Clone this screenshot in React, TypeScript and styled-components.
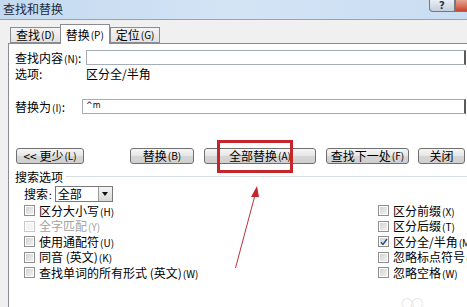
import styled, { createGlobalStyle } from 'styled-components';

const Global = createGlobalStyle`
  html, body { margin: 0; padding: 0; background: #fff; }
  body { font-family: "Noto Sans CJK SC", "DejaVu Sans", sans-serif; font-size: 12px; color: #000; }
`;

const Window = styled.div`
  position: relative;
  width: 467px;
  height: 307px;
  overflow: hidden;
  display: flex;
  flex-direction: column;
  background: #f0f0f0;
`;

const TitleBar = styled.div`
  height: 19px;
  flex: none;
  display: flex;
  align-items: center;
  padding-left: 3px;
  background: linear-gradient(90deg, #c4d9ef 0%, #d3e4f5 50%, #c9ddf2 100%);
  border-bottom: 1px solid #8fa6bd;
  font-size: 12px;
  line-height: 1;
  color: #1e2a38;
`;

const TitleText = styled.span`
  flex: 1;
  margin-top: -2px;
`;

const CaptionButton = styled.div<{ $close?: boolean }>`
  width: ${(p) => (p.$close ? 12 : 26)}px;
  height: 12px;
  align-self: flex-start;
  box-sizing: border-box;
  border: 1px solid #6d7a8a;
  border-top: none;
  border-radius: ${(p) => (p.$close ? '0' : '0 0 0 4px')};
  border-right: ${(p) => (p.$close ? 'none' : '1px solid #6d7a8a')};
  background: ${(p) =>
    p.$close ? 'linear-gradient(#e8a593, #c7452d)' : 'linear-gradient(#e9eef4, #c5ced9)'};
  display: flex;
  align-items: flex-end;
  justify-content: center;
  font-family: "DejaVu Sans", sans-serif;
  font-size: 10px;
  font-weight: bold;
  color: #334;
  line-height: 1;
`;

const Body = styled.div`
  flex: 1;
  display: flex;
  flex-direction: column;
  padding-left: 8px;
  padding-top: 4px;
`;

const TabStrip = styled.div`
  display: flex;
  align-items: flex-end;
  height: 19px;
  padding-left: 2px;
  flex: none;
`;

const Tab = styled.div<{ $active?: boolean }>`
  box-sizing: border-box;
  height: ${(p) => (p.$active ? 20 : 16)}px;
  padding: 0 5px;
  margin-bottom: ${(p) => (p.$active ? -1 : 0)}px;
  display: flex;
  align-items: center;
  border: 1px solid #898c95;
  border-bottom: ${(p) => (p.$active ? 'none' : '1px solid #898c95')};
  margin-left: ${(p) => (p.$active ? -1 : 0)}px;
  background: ${(p) => (p.$active ? '#fff' : 'linear-gradient(#f4f4f4, #e2e2e2)')};
  position: relative;
  z-index: ${(p) => (p.$active ? 1 : 0)};
  font-size: 12px;
  line-height: 1;
  white-space: nowrap;
`;

const Panel = styled.div`
  flex: 1;
  background: #fff;
  border-top: 1px solid #898c95;
  border-left: 1px solid #898c95;
  padding: 6px 0 0 6px;
  display: flex;
  flex-direction: column;
`;

const Key = styled.span`
  font-size: 10px;
  margin-left: 1px;
`;

const FieldRow = styled.div<{ $labelWidth: number; $top?: number }>`
  display: flex;
  align-items: center;
  height: 15px;
  margin-top: ${(p) => p.$top ?? 0}px;
  & > :first-child { width: ${(p) => p.$labelWidth}px; flex: none; }
`;

const Label = styled.span`
  font-size: 12px;
  line-height: 13px;
  white-space: nowrap;
`;

const TextBox = styled.div`
  flex: 1;
  height: 15px;
  box-sizing: border-box;
  border: 1px solid #a5acb5;
  border-right: 2px solid #5a5a5a;
  margin-right: 1px;
  padding-left: 3px;
  font-family: "DejaVu Sans", sans-serif;
  font-size: 8px;
  line-height: 12px;
`;

const ButtonRow = styled.div`
  display: flex;
  align-items: center;
  margin-top: 33px;
  height: 17px;
`;

const Button = styled.div<{ $w: number; $gap?: number }>`
  width: ${(p) => p.$w}px;
  margin-left: ${(p) => p.$gap ?? 0}px;
  height: 16px;
  flex: none;
  box-sizing: border-box;
  border: 1px solid #707070;
  border-radius: 3px;
  background: linear-gradient(#f6f6f6 0%, #e6e6e6 48%, #d6d6d6 52%, #cfcfcf 100%);
  display: flex;
  align-items: center;
  justify-content: center;
  font-size: 12px;
  line-height: 1;
  white-space: nowrap;
`;

const Legend = styled.div`
  display: flex;
  align-items: center;
  margin-top: 5px;
  height: 15px;
  &::after {
    content: '';
    flex: 1;
    height: 1px;
    background: #d5dfe5;
    margin-left: 3px;
  }
`;

const SearchRow = styled.div`
  display: flex;
  align-items: center;
  margin-top: 2px;
  padding-left: 9px;
  height: 16px;
  gap: 3px;
`;

const Select = styled.div`
  width: 58px;
  height: 16px;
  box-sizing: border-box;
  border: 1px solid #7a7a7a;
  display: flex;
  align-items: center;
  padding-left: 2px;
  font-size: 12px;
  line-height: 1;
`;

const SelectText = styled.span`
  flex: 1;
`;

const SelectArrow = styled.div`
  width: 14px;
  height: 14px;
  box-sizing: border-box;
  border-left: 1px solid #9a9a9a;
  background: linear-gradient(#f4f4f4, #d8d8d8);
  display: flex;
  align-items: center;
  justify-content: center;
  &::after {
    content: '';
    border-left: 3px solid transparent;
    border-right: 3px solid transparent;
    border-top: 4px solid #111;
  }
`;

const Options = styled.div`
  display: grid;
  grid-template-columns: 1fr 89px;
  padding-left: 9px;
  margin-top: 1px;
`;

const Column = styled.div`
  display: flex;
  flex-direction: column;
  min-width: 0;
`;

const Check = styled.div<{ $disabled?: boolean }>`
  display: flex;
  align-items: center;
  height: 15.5px;
  gap: 4px;
  color: ${(p) => (p.$disabled ? '#a3a3a3' : '#000')};
  font-size: 12px;
  line-height: 1;
  white-space: nowrap;
`;

const Box = styled.span<{ $disabled?: boolean }>`
  width: 11px;
  height: 11px;
  flex: none;
  box-sizing: border-box;
  border: 1px solid ${(p) => (p.$disabled ? '#c8c8c8' : '#8e8f8f')};
  background: ${(p) =>
    p.$disabled ? '#f4f4f4' : 'linear-gradient(135deg, #d0d0d0, #f4f4f4)'};
  box-shadow: inset 0 0 0 1px #fff;
  display: flex;
  align-items: center;
  justify-content: center;
`;

const Annotation = styled.div`
  position: absolute;
  left: 217px;
  top: 140px;
  width: 76px;
  height: 33px;
  box-sizing: border-box;
  border: 3px solid #c4262c;
  pointer-events: none;
`;

const ArrowSvg = styled.svg`
  position: absolute;
  left: 0;
  top: 0;
  pointer-events: none;
`;

const Watermark = styled.div`
  position: absolute;
  left: 401px;
  top: 294px;
  font-family: "DejaVu Sans", sans-serif;
  font-size: 14px;
  color: #e4e4e4;
  letter-spacing: -2px;
`;

function CheckItem({ label, k, checked, disabled }: { label: string; k: string; checked?: boolean; disabled?: boolean }) {
  return (
    <Check $disabled={disabled}>
      <Box $disabled={disabled}>
        {checked && (
          <svg width="8" height="8" viewBox="0 0 8 8">
            <path d="M1 4.2 L3 6.4 L7 1" fill="none" stroke="#2a4f8a" strokeWidth="1.5" />
          </svg>
        )}
      </Box>
      <span>
        {label}
        <Key>({k})</Key>
      </span>
    </Check>
  );
}

export default function App() {
  return (
    <>
      <Global />
      <Window>
        <TitleBar>
          <TitleText>查找和替换</TitleText>
          <CaptionButton>?</CaptionButton>
          <CaptionButton $close />
        </TitleBar>
        <Body>
          <TabStrip>
            <Tab>查找<Key>(D)</Key></Tab>
            <Tab $active>替换<Key>(P)</Key></Tab>
            <Tab>定位<Key>(G)</Key></Tab>
          </TabStrip>
          <Panel>
            <FieldRow $labelWidth={71}>
              <Label>查找内容<Key>(N)</Key>:</Label>
              <TextBox />
            </FieldRow>
            <FieldRow $labelWidth={71} $top={1}>
              <Label>选项:</Label>
              <Label>区分全/半角</Label>
            </FieldRow>
            <FieldRow $labelWidth={67} $top={18}>
              <Label>替换为<Key>(I)</Key>:</Label>
              <TextBox>^m</TextBox>
            </FieldRow>
            <ButtonRow>
              <Button $w={68} $gap={1}>&lt;&lt; 更少<Key>(L)</Key></Button>
              <Button $w={64} $gap={46}>替换<Key>(B)</Key></Button>
              <Button $w={112} $gap={10}>全部替换<Key>(A)</Key></Button>
              <Button $w={83} $gap={10}>查找下一处<Key>(F)</Key></Button>
              <Button $w={47} $gap={9}>关闭</Button>
            </ButtonRow>
            <Legend>
              <Label>搜索选项</Label>
            </Legend>
            <SearchRow>
              <Label>搜索<Key>:</Key></Label>
              <Select>
                <SelectText>全部</SelectText>
                <SelectArrow />
              </Select>
            </SearchRow>
            <Options>
              <Column>
                <CheckItem label="区分大小写" k="H" />
                <CheckItem label="全字匹配" k="Y" disabled />
                <CheckItem label="使用通配符" k="U" />
                <CheckItem label="同音 (英文)" k="K" />
                <CheckItem label="查找单词的所有形式 (英文)" k="W" />
              </Column>
              <Column>
                <CheckItem label="区分前缀" k="X" />
                <CheckItem label="区分后缀" k="T" />
                <CheckItem label="区分全/半角" k="M" checked />
                <CheckItem label="忽略标点符号" k="S" />
                <CheckItem label="忽略空格" k="W" />
              </Column>
            </Options>
          </Panel>
        </Body>
        <Annotation />
        <ArrowSvg width="467" height="307" viewBox="0 0 467 307">
          <line x1="235.5" y1="268" x2="255" y2="195" stroke="#b8323a" strokeWidth="1" />
          <path d="M257 186 L251 197 L259 197 Z" fill="#c4262c" />
        </ArrowSvg>
        <Watermark>○○</Watermark>
      </Window>
    </>
  );
}
